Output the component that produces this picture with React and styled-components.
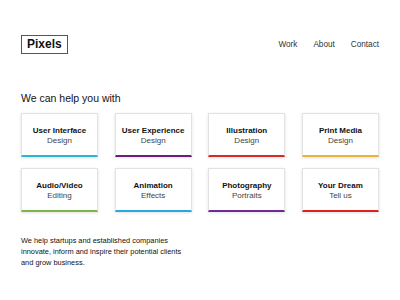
import React from 'react';
import styled, { createGlobalStyle } from 'styled-components';

const Global = createGlobalStyle`
  body {
    margin: 0;
    background: #fff;
    font-family: "Liberation Sans", Arial, sans-serif;
    color: #222;
    -webkit-font-smoothing: antialiased;
  }
`;

const Page = styled.div`
  width: 400px;
  height: 300px;
  box-sizing: border-box;
  padding: 35px 21px 0 21px;
`;

const Header = styled.header`
  display: flex;
  align-items: center;
  justify-content: space-between;
`;

const Logo = styled.div`
  border: 1px solid #555;
  padding: 0 5px;
  font-size: 12px;
  line-height: 17px;
  font-weight: bold;
  color: #111;
`;

const Nav = styled.nav`
  display: flex;
  gap: 16px;
  font-size: 8.2px;
  color: #333;
`;

const Heading = styled.h2`
  margin: 38px 0 0 0;
  font-size: 10.5px;
  font-weight: normal;
  color: #111;
`;

const Grid = styled.div`
  display: grid;
  grid-template-columns: repeat(4, 77px);
  justify-content: space-between;
  row-gap: 11px;
  margin-top: 9px;
`;

const Card = styled.div`
  box-sizing: border-box;
  height: 44px;
  padding-top: 3px;
  background: #fff;
  border: 1px solid #e2e2e2;
  border-bottom: 2px solid ${p => p.$color};
  box-shadow: 0 1px 3px rgba(0, 0, 0, 0.12);
  display: flex;
  flex-direction: column;
  align-items: center;
  justify-content: center;
  font-size: 8px;
  line-height: 10.5px;
`;

const Title = styled.div`
  font-weight: bold;
  color: #111;
`;

const Sub = styled.div`
  color: #444;
`;

const Text = styled.p`
  margin: 23px 0 0 0;
  font-size: 7.4px;
  line-height: 11px;
  color: #111;
`;

const services = [
  ['User Interface', 'Design', '#2bb6d4'],
  ['User Experience', 'Design', '#6b1f78'],
  ['Illustration', 'Design', '#d42a2a'],
  ['Print Media', 'Design', '#e8b43a'],
  ['Audio/Video', 'Editing', '#7ab648'],
  ['Animation', 'Effects', '#27a6e0'],
  ['Photography', 'Portraits', '#6f2a98'],
  ['Your Dream', 'Tell us', '#e02020'],
];

export default function App() {
  return (
    <Page>
      <Global />
      <Header>
        <Logo>Pixels</Logo>
        <Nav>
          <span>Work</span>
          <span>About</span>
          <span>Contact</span>
        </Nav>
      </Header>
      <Heading>We can help you with</Heading>
      <Grid>
        {services.map(([t, s, c]) => (
          <Card key={t} $color={c}>
            <Title>{t}</Title>
            <Sub>{s}</Sub>
          </Card>
        ))}
      </Grid>
      <Text>
        We help startups and established companies<br />
        innovate, inform and inspire their potential clients<br />
        and grow business.
      </Text>
    </Page>
  );
}
